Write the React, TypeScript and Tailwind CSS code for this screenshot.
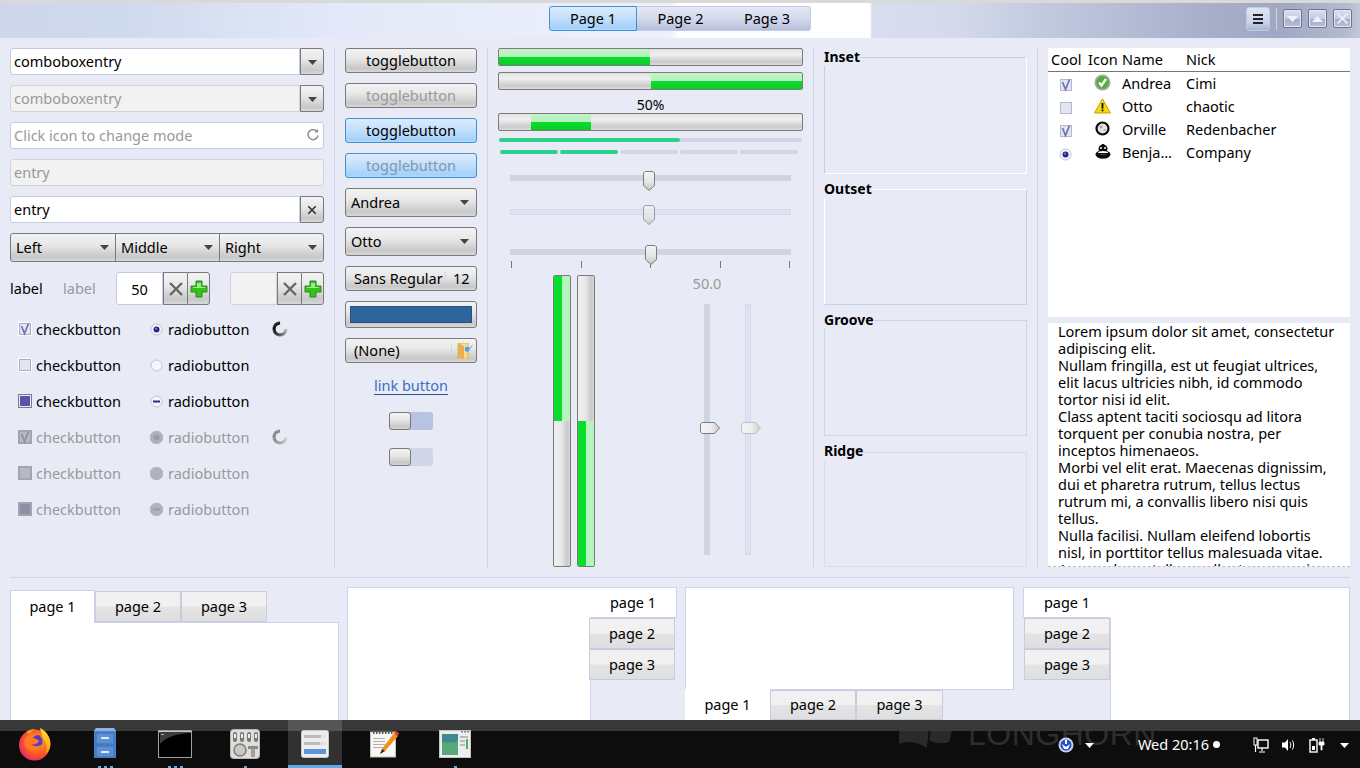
import React from "react";

const btn = "border border-[#7a7a7a] rounded-[3px] bg-[linear-gradient(180deg,#f3f3f3,#e8e8e8_40%,#c8c8c8_85%,#d8d8d8)]";
const blueBtn = "border border-[#3d92db] rounded-[3px] bg-[linear-gradient(180deg,#dcecfc,#c4e0fb_45%,#a4d2fb_90%,#b4d8fb)]";
const entry = "border border-[#c4cbe6] rounded-[3px] bg-white";
const disabledEntry = "border border-[#cfd3e0] rounded-[3px] bg-[#f2f2f2] text-[#999999]";
const troughH = "border border-[#7a7a7a] rounded-[2px] bg-[linear-gradient(180deg,#e2e2e2,#efefef_35%,#cacaca_80%,#dcdcdc)]";
const fillH = "bg-[linear-gradient(180deg,#c4f2c8,#b2f2bc_48%,#0ade2c_52%,#0cca28)]";
const troughV = "border border-[#7a7a7a] rounded-[2px] bg-[linear-gradient(90deg,#efefef,#e8e8e8_45%,#c8c8c8_85%,#dcdcdc)]";
const fillV = "bg-[linear-gradient(90deg,#0ade2c,#0ade2c_48%,#b6f4be_52%,#b6f4be)]";
const tabIdle = "border border-[#c8cdde] bg-[linear-gradient(180deg,#f1f1f1,#f1f1f1_48%,#e4e4e4_52%,#dedede)]";

function Arrow({ c = "#444" }: { c?: string }) {
  return (
    <svg width="9" height="5" viewBox="0 0 9 5" className="shrink-0 mt-[2px]">
      <path d="M0 0h9L4.500 5z" fill={c} />
    </svg>
  );
}

function XIcon({ c = "#666", w = 2.4, s = 16 }: { c?: string; w?: number; s?: number }) {
  return (
    <svg width={s} height={s} viewBox="0 0 16 16">
      <path d="M2 2l12 12M14 2L2 14" stroke={c} strokeWidth={w} fill="none" />
    </svg>
  );
}

function Plus() {
  return (
    <svg width="18" height="18" viewBox="0 0 18 18">
      <path d="M6 1h6v5h5v6h-5v5H6v-5H1V6h5z" fill="#35c31a" stroke="#2c8a14" strokeWidth="1" />
      <path d="M7 3h4v4h4v1H3V7h4z" fill="#9fe888" />
    </svg>
  );
}

function Spinner({ c = "#111" }: { c?: string }) {
  const N = 24;
  const segs = Array.from({ length: N }, (_, i) => i);
  return (
    <svg width="16" height="16" viewBox="0 0 16 16">
      {segs.map((i) => {
        const t = i / N;
        const a0 = -Math.PI / 2 - t * Math.PI * 1.5;
        const a1 = -Math.PI / 2 - ((i + 1.2) / N) * Math.PI * 1.5;
        const op = t < 0.35 ? 1 : 1 - ((t - 0.35) / 0.65) * 0.88;
        return (
          <path
            key={i}
            d={`M${8 + 6 * Math.cos(a0)} ${8 + 6 * Math.sin(a0)}L${8 + 6 * Math.cos(a1)} ${8 + 6 * Math.sin(a1)}`}
            stroke={c}
            strokeWidth="3"
            opacity={op}
          />
        );
      })}
    </svg>
  );
}

function Check({ kind, dis, faint }: { kind: "on" | "off" | "mix"; dis?: boolean; faint?: boolean }) {
  const outer = dis ? "#a4a4b0" : kind === "mix" ? "#77798f" : "#ffffff";
  const inner = dis ? "#a4a4b0" : kind === "mix" ? "#e8ebf6" : faint ? "#b4b9cc" : "#a8aec6";
  const fill = dis ? "#b6b8c4" : "#e2e6f3";
  return (
    <svg width="14" height="14" viewBox="0 0 14 14" className="shrink-0">
      <rect x="0.500" y="0.500" width="13" height="13" fill={fill} stroke={outer} />
      <rect x="1.500" y="1.500" width="11" height="11" fill="none" stroke={inner} />
      {kind === "on" && <path d="M3.500 4l3 7.500L10.500 1.500" stroke={dis ? "#8e90a0" : "#6f74b4"} strokeWidth="1.700" fill="none" />}
      {kind === "mix" && <rect x="2" y="2" width="10" height="10" fill={dis ? "#8e8ea6" : "#5f50a8"} />}
    </svg>
  );
}

function Radio({ kind, dis }: { kind: "on" | "off" | "mix"; dis?: boolean }) {
  return (
    <svg width="13" height="13" viewBox="0 0 13 13" className="shrink-0">
      <circle cx="6.500" cy="6.500" r={dis ? 6.300 : 5.500} fill={dis ? "#b0b2bd" : "#f4f6fb"} stroke={dis ? "#b0b2bd" : "#bcc2d4"} />
      {kind === "on" && <circle cx="6.500" cy="6.500" r="3" fill={dis ? "#9a9ca8" : "#28288c"} />}
      {kind === "on" && !dis && <circle cx="6" cy="5.800" r="1" fill="#8a8ad0" />}
      {kind === "mix" && <rect x="3" y="5.500" width="7" height="2" fill={dis ? "#9a9ca8" : "#28288c"} />}
    </svg>
  );
}

function ThumbDown() {
  return (
    <svg width="12" height="20" viewBox="0 0 12 20">
      <defs>
        <linearGradient id="td" x1="0" y1="0" x2="0" y2="1">
          <stop offset="0" stopColor="#f4f4f4" />
          <stop offset="0.55" stopColor="#e6e6e6" />
          <stop offset="1" stopColor="#c4c4c4" />
        </linearGradient>
      </defs>
      <path d="M2 .5h8l1.500 1.500v12.500L6 19.500 .5 14.500V2z" fill="url(#td)" stroke="#7d7d7d" />
    </svg>
  );
}

function ThumbRight({ dis }: { dis?: boolean }) {
  return (
    <svg width="20" height="12" viewBox="0 0 20 12">
      <defs>
        <linearGradient id="tr" x1="0" y1="0" x2="1" y2="0">
          <stop offset="0" stopColor="#f4f4f4" />
          <stop offset="0.55" stopColor="#eeeeee" />
          <stop offset="1" stopColor="#cccccc" />
        </linearGradient>
      </defs>
      <path d="M2 .5h12.500L19.500 6l-5 5.500H2L.5 10V2z" fill="url(#tr)" stroke={dis ? "#c0c0c6" : "#7d7d7d"} />
    </svg>
  );
}

function Progress({ children }: { children: React.ReactNode }) {
  return <div className={`${troughH} h-[18px] w-full flex overflow-hidden`}>{children}</div>;
}

function HScale({ dis, thumb }: { dis?: boolean; thumb: string }) {
  return (
    <div className={`relative h-[6px] w-[281px] ml-[12px] ${dis ? "bg-[#dfe3f0] border border-[#d3d9ee]" : "bg-[#cfd4e3]"}`}>
      <div className={`absolute ${dis ? "top-[-5px]" : "top-[-4px]"} ${thumb} ${dis ? "opacity-70" : ""}`}>
        <ThumbDown />
      </div>
    </div>
  );
}

function VScale({ dis }: { dis?: boolean }) {
  return (
    <div className={`relative w-[6px] h-[251px] ${dis ? "bg-[#dfe3f0] border border-[#d3d9ee]" : "bg-[#cfd4e3]"}`}>
      <div className={`absolute ${dis ? "left-[-5px] top-[117px]" : "left-[-4px] top-[118px]"}`}>
        <ThumbRight dis={dis} />
      </div>
    </div>
  );
}

function Frame({ label, h, cls, up }: { label: string; h: string; cls: string; up?: boolean }) {
  return (
    <fieldset className={`${h} border ${cls} w-full`}>
      <legend className={`-ml-px font-bold text-[14px] text-black ${up ? "leading-[16px] pb-[2px]" : "leading-[18px]"}`}>{label}</legend>
    </fieldset>
  );
}

function Sep() {
  return <div className="w-px bg-[#cdd3ea] self-stretch shrink-0" />;
}

function TreeIcon({ k }: { k: number }) {
  if (k === 0)
    return (
      <svg width="17" height="17" viewBox="0 0 17 17">
        <circle cx="8.500" cy="8.500" r="8" fill="#a8a8a8" />
        <circle cx="8.500" cy="8.500" r="6.300" fill="#4fae34" />
        <path d="M5 8.500l2.500 3L12 5" stroke="#fff" strokeWidth="2.400" fill="none" />
      </svg>
    );
  if (k === 1)
    return (
      <svg width="17" height="16" viewBox="0 0 17 16">
        <path d="M8.500 .8L16.500 15H.5z" fill="#f5d90a" stroke="#c9a400" />
        <rect x="7.600" y="5" width="1.800" height="5.500" fill="#111" />
        <rect x="7.600" y="11.500" width="1.800" height="1.800" fill="#111" />
      </svg>
    );
  if (k === 2)
    return (
      <svg width="15" height="15" viewBox="0 0 15 15" className="ml-[1px]">
        <circle cx="7.500" cy="7.500" r="6" fill="#e4e4e4" stroke="#0a0a0a" strokeWidth="2.200" />
        <circle cx="6" cy="6" r="1.500" fill="#a8a8a8" />
        <circle cx="9.500" cy="9" r="1" fill="#a8a8a8" />
      </svg>
    );
  return (
    <svg width="16" height="15" viewBox="0 0 16 15" className="ml-[1px]">
      <circle cx="8" cy="5" r="4.500" fill="#0a0a0a" />
      <rect x="7" y="0" width="2" height="2" fill="#0a0a0a" />
      <circle cx="6" cy="4" r="1" fill="#ffffff" />
      <circle cx="10" cy="4" r="1" fill="#ffffff" />
      <ellipse cx="8" cy="10.500" rx="7.500" ry="4.200" fill="#0a0a0a" />
      <ellipse cx="8" cy="8.800" rx="5" ry="1.800" fill="#ffffff" />
      <rect x="2" y="9" width="12" height="1.500" fill="#0a0a0a" />
    </svg>
  );
}

function Firefox() {
  return (
    <svg width="34" height="34" viewBox="0 0 34 34">
      <defs>
        <radialGradient id="ff1" cx="0.6" cy="0.4" r="0.7">
          <stop offset="0" stopColor="#ffb020" />
          <stop offset="0.55" stopColor="#ff5a20" />
          <stop offset="1" stopColor="#e0207a" />
        </radialGradient>
        <linearGradient id="ff2" x1="0" y1="0" x2="0" y2="1">
          <stop offset="0" stopColor="#ffe030" />
          <stop offset="1" stopColor="#ff9a10" />
        </linearGradient>
      </defs>
      <circle cx="16.500" cy="18" r="15.500" fill="url(#ff1)" />
      <path d="M22 1c6 3 11 9 10.500 17-.5 4-2 7-5 9 2-5 1-11-2-15-1-4-3-7-3.500-11z" fill="url(#ff2)" />
      <circle cx="16" cy="15" r="8.500" fill="#5a3ac0" />
      <path d="M9 9c3-3 9-4 12-1-3 0-5 1-6 3 2 1 5 1 6 3-1 3-5 4-8 3 3 3 8 3 11 0-1 6-9 9-14 5-5-3-5-10-1-13z" fill="#ff7a20" />
      <path d="M8 5c3-2 6-3 9-3-2 1-4 3-5 5z" fill="#ff9a20" />
    </svg>
  );
}

function Cabinet() {
  return (
    <svg width="24" height="32" viewBox="0 0 24 32">
      <path d="M3 0h18l2 3v27H1V3z" fill="#4d82cc" />
      <path d="M3 0h18l2 3H1z" fill="#8fb4e2" />
      <rect x="3" y="5" width="18" height="11" fill="#5c90d6" stroke="#3f6fb2" />
      <rect x="3" y="18" width="18" height="11" fill="#5c90d6" stroke="#3f6fb2" />
      <rect x="8" y="9" width="8" height="2" rx="0.500" fill="#e8eef8" />
      <rect x="8" y="23" width="8" height="2" rx="0.500" fill="#e8eef8" />
    </svg>
  );
}

function Terminal() {
  return (
    <svg width="34" height="28" viewBox="0 0 34 28">
      <rect x="0.500" y="0.500" width="33" height="27" fill="#000" stroke="#a0a0a0" />
      <rect x="1" y="1" width="32" height="1.500" fill="#c8c8c8" />
      <path d="M2 14C8 7 18 4 32 3v-1H2z" fill="#3c3c3c" />
      <rect x="3" y="4" width="3" height="1" fill="#aaa" />
    </svg>
  );
}

function Tweak() {
  return (
    <svg width="30" height="30" viewBox="0 0 30 30">
      <rect x="0.500" y="0.500" width="29" height="29" rx="3" fill="#dededa" stroke="#b8b8b0" />
      {[4, 11, 18, 25].map((x) => (
        <g key={x}>
          <rect x={x - 1} y="3" width="4" height="10" rx="2" fill="#777" />
          <rect x={x} y="5" width="2" height="4" fill="#eee" />
        </g>
      ))}
      <circle cx="10" cy="21" r="6" fill="#c8c8c0" stroke="#7c7c7c" strokeWidth="1.500" />
      <rect x="18" y="17" width="10" height="3" fill="#8a8a8a" />
      <rect x="21" y="20" width="4" height="8" fill="#a0a0a0" />
    </svg>
  );
}

function WidgetIcon() {
  return (
    <svg width="28" height="28" viewBox="0 0 28 28">
      <rect x="0.500" y="0.500" width="27" height="27" rx="2" fill="#eeeeec" stroke="#c8c8c8" />
      <rect x="3" y="5" width="22" height="3" fill="#bcbcbc" />
      <rect x="20" y="5" width="5" height="3" fill="#e4e4e4" />
      <rect x="3" y="12" width="22" height="3" fill="#bcbcbc" />
      <rect x="19" y="12" width="6" height="3" fill="#e0e0e0" />
      <rect x="3" y="19" width="22" height="5" fill="#5a94dc" />
    </svg>
  );
}

function Notepad() {
  return (
    <svg width="30" height="28" viewBox="0 0 30 28">
      <rect x="0.500" y="2" width="25" height="25" fill="#f8f8f4" stroke="#c0c0b8" />
      {[3, 6, 9, 12, 15, 18, 21].map((x) => (
        <rect key={x} x={x} y="0" width="1.500" height="4" fill="#555" />
      ))}
      {[8, 11, 14, 17].map((y) => (
        <rect key={y} x="3" y={y} width="12" height="1" fill="#b0b0b0" />
      ))}
      <path d="M10 24l2-5L24 3l4 3-13 15z" fill="#f09020" />
      <path d="M24 3l2-2 3 2-1 3z" fill="#d84030" />
      <path d="M10 24l2-5 3 2z" fill="#333" />
    </svg>
  );
}

function WindowIcon() {
  return (
    <svg width="32" height="28" viewBox="0 0 32 28">
      <rect x="0.500" y="0.500" width="31" height="27" fill="#ededed" stroke="#c4c4c4" />
      <rect x="3" y="4" width="16" height="21" fill="#3a8a90" />
      <path d="M3 25V12c6 0 12 2 16-2v15z" fill="#58a878" />
      <rect x="21" y="6" width="8" height="2" fill="#bbb" />
      <rect x="21" y="10" width="5" height="2" fill="#bbb" />
      <rect x="27" y="9" width="2" height="10" fill="#58a870" />
      <rect x="21" y="14" width="5" height="2" fill="#bbb" />
      <rect x="22" y="1" width="2" height="1.500" fill="#888" />
      <rect x="25" y="1" width="2" height="1.500" fill="#888" />
      <rect x="28" y="1" width="2" height="1.500" fill="#888" />
    </svg>
  );
}

function TaskItem({ children, dots = 0, active }: { children: React.ReactNode; dots?: number; active?: boolean }) {
  return (
    <div className={`relative w-[54px] h-full flex items-center justify-center ${active ? "bg-white/15" : ""}`}>
      {children}
      {active && <div className="absolute bottom-0 inset-x-0 h-[3px] bg-[#62a8e8]" />}
      {dots > 0 && (
        <div className="absolute bottom-0 inset-x-0 flex justify-center gap-[3px]">
          {Array.from({ length: dots }, (_, i) => (
            <div key={i} className="w-[3px] h-[2px] bg-[#62a8e8]" />
          ))}
        </div>
      )}
    </div>
  );
}

const lorem = [
  "Lorem ipsum dolor sit amet, consectetur",
  "adipiscing elit.",
  "Nullam fringilla, est ut feugiat ultrices,",
  "elit lacus ultricies nibh, id commodo",
  "tortor nisi id elit.",
  "Class aptent taciti sociosqu ad litora",
  "torquent per conubia nostra, per",
  "inceptos himenaeos.",
  "Morbi vel elit erat. Maecenas dignissim,",
  "dui et pharetra rutrum, tellus lectus",
  "rutrum mi, a convallis libero nisi quis",
  "tellus.",
  "Nulla facilisi. Nullam eleifend lobortis",
  "nisl, in porttitor tellus malesuada vitae.",
  "Aenean lacus tellus, pellentesque quis",
];

const rows = [
  ["on", "Andrea", "Cimi"],
  ["off", "Otto", "chaotic"],
  ["on", "Orville", "Redenbacher"],
  ["radio", "Benja…", "Company"],
];

export default function App() {
  return (
    <div className="relative w-[1360px] h-[768px] overflow-hidden bg-[#e8ebf6] text-black text-[14.5px] leading-[18px] font-['Noto_Sans',sans-serif]">
      {/* header */}
      <div className="h-[3px] bg-[#d9d9d9]" />
      <div className="h-[35px] flex items-start bg-[linear-gradient(90deg,#cdd6ea,#d0daee_130px,#e3e9f8_340px,#edf1fb_670px,#ffffff_680px,#ffffff_870px,#d9deee_872px,#d4daea_955px,#c4cce2_1030px,#a9b0ca_1200px,#a0a7c2_1280px,#b4bad0_1345px,#c2c8d8)]">
        <div className="ml-[549px] mt-[3px] flex h-[25px] w-[262px]">
          <div className={`${blueBtn} rounded-r-none w-[88px] flex items-center justify-center pb-[2px]`}>Page 1</div>
          <div className="w-[87px] border-y border-[#c3cbe4] bg-[linear-gradient(180deg,#e4e8f5,#d4daec_50%,#b6bedb)] flex items-center justify-center pb-[2px]">Page 2</div>
          <div className="w-[87px] border border-l-0 border-[#c3cbe4] rounded-r-[3px] bg-[linear-gradient(180deg,#e4e8f5,#d4daec_50%,#b6bedb)] flex items-center justify-center pb-[2px]">Page 3</div>
        </div>
        <div className="ml-[435px] mt-[4px] w-[24px] h-[24px] rounded-[3px] bg-[linear-gradient(180deg,#dfe4f4,#ced5ea_60%,#aab4d6)] flex flex-col items-center justify-center gap-[2px] border border-[#c4cae0]">
          <div className="w-[10px] h-[2px] bg-[#222]" />
          <div className="w-[10px] h-[2px] bg-[#222]" />
          <div className="w-[10px] h-[2px] bg-[#222]" />
        </div>
        <div className="ml-[6px] mt-[5px] w-px h-[22px] bg-[#d0d5e4]" />
        <div className="ml-[6px] mt-[6px] flex gap-[6px]">
          {["down", "up", "x"].map((k) => (
            <div key={k} className="w-[19px] h-[19px] rounded-[2px] border border-[#6f7488] bg-[linear-gradient(180deg,#dadfee,#c4cce4_50%,#a4acd0_52%,#b8bfdb)] flex items-center justify-center shadow-[inset_0_0_0_1px_#e4e7f2]">
              {k === "down" && <svg width="11" height="6" viewBox="0 0 11 6"><path d="M0 0h11L5.500 6z" fill="#f2f3f8" /></svg>}
              {k === "up" && <svg width="11" height="6" viewBox="0 0 11 6"><path d="M0 6h11L5.500 0z" fill="#f2f3f8" /></svg>}
              {k === "x" && <XIcon c="#eceef5" w={2.200} s={13} />}
            </div>
          ))}
        </div>
      </div>

      {/* main */}
      <div className="flex gap-[10px] px-[10px] pt-[10px] h-[529px]">
        {/* col 1 */}
        <div className="w-[314px] shrink-0 flex flex-col gap-[10px]">
          <div className="flex h-[27px]">
            <div className={`${entry} rounded-r-none flex-1 flex items-center px-[3px] pb-[2px]`}>comboboxentry</div>
            <div className={`${btn} rounded-l-none w-[24px] flex items-center justify-center`}><Arrow /></div>
          </div>
          <div className="flex h-[27px]">
            <div className={`${disabledEntry} rounded-r-none flex-1 flex items-center px-[3px] pb-[2px]`}>comboboxentry</div>
            <div className={`${btn} rounded-l-none w-[24px] flex items-center justify-center`}><Arrow /></div>
          </div>
          <div className={`${entry} h-[27px] flex items-center justify-between px-[3px] pb-[2px] text-[#999999]`}>
            <span>Click icon to change mode</span>
            <svg width="12" height="12" viewBox="0 0 12 12" className="mr-[1px]">
              <path d="M10 2.500A5 5 0 1 0 11 6.500" stroke="#8e8e8e" strokeWidth="1.500" fill="none" />
              <path d="M7.500 3.500h3.500V0z" fill="#8e8e8e" />
            </svg>
          </div>
          <div className={`${disabledEntry} h-[27px] flex items-center px-[3px] pb-[2px]`}>entry</div>
          <div className="flex h-[27px]">
            <div className={`${entry} rounded-r-none flex-1 flex items-center px-[3px] pb-[2px]`}>entry</div>
            <div className={`${btn} rounded-l-none w-[24px] flex items-center justify-center`}><XIcon c="#333" w={2.600} s={10} /></div>
          </div>
          <div className={`${btn} h-[29px] flex`}>
            <div className="w-[105px] flex items-center justify-between pl-[5px] pr-[6px] pb-[2px] border-r border-[#7a7a7a]">Left<Arrow /></div>
            <div className="w-[104px] flex items-center justify-between pl-[5px] pr-[6px] pb-[2px] border-r border-[#7a7a7a]">Middle<Arrow /></div>
            <div className="flex-1 flex items-center justify-between pl-[5px] pr-[6px] pb-[2px]">Right<Arrow /></div>
          </div>
          <div className="h-[33px] flex items-center">
            <span className="w-[53px] pb-[2px]">label</span>
            <span className="w-[53px] pb-[2px] text-[#999999]">label</span>
            <div className="flex h-full w-[94px]">
              <div className={`${entry} rounded-r-none w-[47px] flex items-center justify-center`}>50</div>
              <div className={`${btn} rounded-none border-x-0 border-l w-[24px] flex items-center justify-center`}><XIcon /></div>
              <div className={`${btn} rounded-l-none w-[23px] flex items-center justify-center`}><Plus /></div>
            </div>
            <div className="flex h-full w-[94px] ml-[20px]">
              <div className={`${disabledEntry} rounded-r-none w-[47px]`} />
              <div className={`${btn} rounded-none border-x-0 border-l w-[24px] flex items-center justify-center`}><XIcon /></div>
              <div className={`${btn} rounded-l-none w-[23px] flex items-center justify-center`}><Plus /></div>
            </div>
          </div>
          <div className="grid grid-cols-[132px_123px_auto] grid-rows-[repeat(6,36px)] pl-[8px] -mt-[4px] items-center">
            {([
              ["on", false, true],
              ["off", false, false],
              ["mix", false, false],
              ["on", true, true],
              ["off", true, false],
              ["mix", true, false],
            ] as const).map(([k, dis, spin], i) => (
              <React.Fragment key={i}>
                <div className={`flex items-center gap-[4px] ${dis ? "text-[#999999]" : ""}`}>
                  <Check kind={k} dis={dis} />checkbutton
                </div>
                <div className={`flex items-center gap-[5px] ${dis ? "text-[#999999]" : ""}`}>
                  <Radio kind={k} dis={dis} />radiobutton
                </div>
                <div className="-ml-[1px]">{spin ? <Spinner c={dis ? "#888" : "#111"} /> : null}</div>
              </React.Fragment>
            ))}
          </div>
        </div>

        <Sep />

        {/* col 2 */}
        <div className="w-[132px] shrink-0 flex flex-col">
          <div className={`${btn} h-[25px] flex items-center justify-center pb-[2px]`}>togglebutton</div>
          <div className={`${btn} h-[25px] mt-[10px] flex items-center justify-center pb-[2px] text-[#999999]`}>togglebutton</div>
          <div className={`${blueBtn} h-[25px] mt-[10px] flex items-center justify-center pb-[2px]`}>togglebutton</div>
          <div className={`${blueBtn} h-[25px] mt-[10px] flex items-center justify-center pb-[2px] text-[#7f97ad]`}>togglebutton</div>
          <div className={`${btn} h-[29px] mt-[10px] flex items-center justify-between pl-[5px] pr-[7px] pb-[2px]`}>Andrea<Arrow /></div>
          <div className={`${btn} h-[29px] mt-[10px] flex items-center justify-between pl-[5px] pr-[7px] pb-[2px]`}>Otto<Arrow /></div>
          <div className={`${btn} h-[25px] mt-[10px] flex items-center pl-[8px] pb-[2px]`}>
            <span className="w-[91px]">Sans Regular</span>
            <span className="w-px h-[12px] bg-[#d0d5e6] mr-[7px]" />
            <span>12</span>
          </div>
          <div className={`${btn} h-[27px] mt-[10px] p-[4px]`}>
            <div className="h-full bg-[#2f659f] border border-[#25507f]" />
          </div>
          <div className={`${btn} h-[25px] mt-[10px] flex items-center pl-[8px] pb-[2px]`}>
            <span className="w-[97px]">(None)</span>
            <span className="w-px h-[12px] bg-[#d0d5e6] mr-[5px]" />
            <svg width="16" height="16" viewBox="0 0 16 16" className="mt-[2px]">
              <path d="M1 0h10v16H1z" fill="#f8dc8c" stroke="#d8a840" strokeWidth="0.800" />
              <path d="M1 0l6 3v13l-6-1z" fill="#e4b050" />
              <path d="M15.500 2.500L12 6V4.500H8.500V8H12V6.500" fill="#48a8e8" stroke="#48a8e8" />
            </svg>
          </div>
          <div className="mt-[14px] h-[18px] flex justify-center text-[#3b6ec4]">
            <span className="border-b border-[#2a50a0] leading-[17px] h-[18px]">link button</span>
          </div>
          <div className="mt-[17px] ml-[44px] w-[44px] h-[18px] rounded-[3px] bg-[#b8c3e2]">
            <div className={`${btn} w-[22px] h-[18px]`} />
          </div>
          <div className="mt-[18px] ml-[44px] w-[44px] h-[18px] rounded-[3px] bg-[#d2d7e8]">
            <div className={`${btn} w-[22px] h-[18px]`} />
          </div>
        </div>

        <Sep />

        {/* col 3 */}
        <div className="w-[305px] shrink-0 flex flex-col">
          <Progress>
            <div className={`${fillH} w-[151px]`} />
          </Progress>
          <div className="mt-[6px]">
            <Progress>
              <div className="w-[152px]" />
              <div className={`${fillH} flex-1`} />
            </Progress>
          </div>
          <div className="h-[23px] flex items-end justify-center leading-[16px] text-[14px]">50%</div>
          <Progress>
            <div className="w-[32px]" />
            <div className={`${fillH} w-[60px]`} />
          </Progress>
          <div className="mt-[7px] ml-[1px] w-[303px] h-[4px] rounded-full bg-[#d2d6e2]">
            <div className="w-[181px] h-full rounded-full bg-[#2ad08c]" />
          </div>
          <div className="mt-[8px] ml-[2px] flex gap-[2px]">
            <div className="w-[58px] h-[4px] rounded-full bg-[#2ad08c]" />
            <div className="w-[58px] h-[4px] rounded-full bg-[#2ad08c]" />
            <div className="w-[58px] h-[4px] rounded-full bg-[#d2d6e2]" />
            <div className="w-[58px] h-[4px] rounded-full bg-[#d2d6e2]" />
            <div className="w-[58px] h-[4px] rounded-full bg-[#d2d6e2]" />
          </div>
          <div className="mt-[21px]"><HScale thumb="left-[133px]" /></div>
          <div className="mt-[28px]"><HScale dis thumb="left-[132px]" /></div>
          <div className="mt-[34px]"><HScale thumb="left-[135px]" /></div>
          <div className="mt-[6px] ml-[13px] w-[279px] h-[7px] flex justify-between">
            {[0, 1, 2, 3, 4].map((i) => (
              <div key={i} className="w-px h-full bg-[#777]" />
            ))}
          </div>
          <div className="mt-[7px] flex h-[292px]">
            <div className={`${troughV} ml-[55px] w-[18px] h-full flex flex-col overflow-hidden`}>
              <div className={`${fillV} h-[145px]`} />
            </div>
            <div className={`${troughV} ml-[6px] w-[18px] h-full flex flex-col overflow-hidden`}>
              <div className="h-[145px]" />
              <div className={`${fillV} flex-1`} />
            </div>
            <div className="ml-[92px] w-[40px] flex flex-col items-center">
              <div className="h-[18px] -mt-[1px] text-[#999999] leading-[18px]">50.0</div>
              <div className="mt-[12px]"><VScale /></div>
            </div>
            <div className="ml-[18px] pt-[29px]">
              <VScale dis />
            </div>
          </div>
        </div>

        <Sep />

        {/* col 4 */}
        <div className="w-[203px] shrink-0 flex flex-col">
          <Frame label="Inset" h="h-[126px]" cls="border-t-[#c8d0e8] border-l-[#c8d0e8] border-r-white border-b-white" />
          <div className="mt-[6px]"><Frame label="Outset" h="h-[125px]" cls="border-t-white border-l-white border-r-[#c8d0e8] border-b-[#c8d0e8]" /></div>
          <div className="mt-[6px]"><Frame label="Groove" h="h-[125px]" cls="border-[#cdd3ea]" /></div>
          <div className="mt-[7px]"><Frame label="Ridge" up h="h-[124px]" cls="border-[#d6dbee]" /></div>
        </div>

        <Sep />

        {/* col 5 */}
        <div className="w-[302px] shrink-0 flex flex-col">
          <div className="h-[269px] bg-white">
            <div className="h-[24px] flex items-center border-b border-[#777] pb-[2px]">
              <span className="ml-[3px] w-[37px]">Cool</span>
              <span className="w-[34px]">Icon</span>
              <span className="w-[64px]">Name</span>
              <span>Nick</span>
            </div>
            {rows.map(([k, name, nick], i) => (
              <div key={i} className="h-[23px] flex items-center">
                <div className="ml-[11px] w-[35px] mt-[3px]">
                  {k === "radio" ? <Radio kind="on" /> : <Check kind={k as "on" | "off"} faint />}
                </div>
                <div className="w-[28px] flex justify-start -mt-[2px]"><TreeIcon k={i} /></div>
                <span className="w-[64px] pb-[2px]">{name}</span>
                <span className="pb-[2px]">{nick}</span>
              </div>
            ))}
          </div>
          <div className="mt-[6px] h-[244px] bg-white overflow-hidden pl-[10px] leading-[17px] border-b border-dashed border-[#bdbdbd] whitespace-nowrap">
            {lorem.map((l, i) => (
              <div key={i}>{l}</div>
            ))}
          </div>
        </div>
      </div>

      {/* separator */}
      <div className="mx-[10px] mt-[10px] h-px bg-[#cdd3ea]" />

      {/* notebooks */}
      <div className="flex gap-[8px] px-[10px] mt-[9px] h-[200px]">
        <div className="w-[329px] flex flex-col relative pt-[2px]">
          <div className="flex items-end h-[33px]">
            <div className="w-[85px] h-[33px] bg-white border border-b-0 border-[#cdd3ea] flex items-center justify-center pb-[2px] z-10 -mb-px">page 1</div>
            <div className={`${tabIdle} w-[86px] h-[31px] flex items-center justify-center pb-[2px]`}>page 2</div>
            <div className={`${tabIdle} w-[86px] h-[31px] flex items-center justify-center pb-[2px]`}>page 3</div>
          </div>
          <div className="flex-1 bg-white border border-[#cdd3ea]" />
        </div>
        <div className="w-[330px] flex">
          <div className="w-[243px] bg-white border border-r-0 border-[#cdd3ea] border-b-0" />
          <div className="flex-1 flex flex-col">
            <div className="h-[31px] bg-white border border-l-0 border-[#cdd3ea] flex items-center justify-center pb-[2px]">page 1</div>
            <div className="border-l border-[#cdd3ea] flex-1">
              <div className={`${tabIdle} ml-[-2px] w-[86px] h-[31px] flex items-center justify-center pb-[2px]`}>page 2</div>
              <div className={`${tabIdle} ml-[-2px] w-[86px] h-[31px] flex items-center justify-center pb-[2px]`}>page 3</div>
            </div>
          </div>
        </div>
        <div className="w-[329px] flex flex-col">
          <div className="h-[103px] bg-white border border-[#cdd3ea]" />
          <div className="flex">
            <div className="w-[85px] h-[31px] -mt-px z-10 bg-white flex items-center justify-center pb-[2px]">page 1</div>
            <div className={`${tabIdle} w-[86px] h-[30px] flex items-center justify-center pb-[2px]`}>page 2</div>
            <div className={`${tabIdle} w-[87px] h-[30px] flex items-center justify-center pb-[2px]`}>page 3</div>
          </div>
        </div>
        <div className="w-[327px] ml-[1px] flex">
          <div className="w-[87px] flex flex-col">
            <div className="h-[31px] bg-white border border-r-0 border-[#cdd3ea] flex items-center justify-center pb-[2px]">page 1</div>
            <div className={`${tabIdle} ml-[1px] h-[31px] flex items-center justify-center pb-[2px]`}>page 2</div>
            <div className={`${tabIdle} ml-[1px] h-[31px] flex items-center justify-center pb-[2px]`}>page 3</div>
          </div>
          <div className="flex-1 flex flex-col">
            <div className="flex-1 bg-white border border-l-0 border-[#cdd3ea] relative">
              <div className="absolute left-0 top-[30px] bottom-0 w-px bg-[#cdd3ea]" />
            </div>
          </div>
        </div>
      </div>

      {/* panel */}
      <div className="absolute left-0 right-0 bottom-0 h-[48px] bg-[#0d0d0d] text-white overflow-hidden">
        <div className="absolute left-[897px] top-[-2px] flex items-start gap-[11px] text-[#2e2e2e]">
          <svg width="60" height="30" viewBox="0 0 56 30"><path d="M0 8c14-8 22 6 30 0L28 30C18 24 10 22 0 26z" fill="#2a2a2a" /><path d="M34 0c8 6 14 4 22 2l-6 22c-6 2-14 2-20-2z" fill="#2a2a2a" /></svg>
          <span className="text-[32px] leading-[32px] tracking-[0.5px] font-['Liberation_Sans',sans-serif]">LONGHORN</span>
        </div>
        <div className="absolute inset-x-0 top-0 h-[11px] bg-[#383838]" />
        <div className="relative flex justify-between h-full">
          <div className="flex h-full gap-[16px] pl-[8px]">
            <TaskItem><Firefox /></TaskItem>
            <TaskItem dots={3}><Cabinet /></TaskItem>
            <TaskItem dots={3}><Terminal /></TaskItem>
            <TaskItem dots={1}><Tweak /></TaskItem>
            <TaskItem active><WidgetIcon /></TaskItem>
            <TaskItem><Notepad /></TaskItem>
            <TaskItem dots={1}><WindowIcon /></TaskItem>
          </div>
          <div className="flex items-center h-full pt-[1px] text-[14.5px]">
            <svg width="16" height="16" viewBox="0 0 16 16" className="mr-[11px]">
              <circle cx="8" cy="8" r="7.500" fill="#c8d2e8" />
              <circle cx="8" cy="8" r="5.500" fill="#2a4fc8" />
              <path d="M4 7l4 3 4-3-2 5H6zM7 3h2v4H7z" fill="#fff" />
            </svg>
            <Arrow c="#ffffff" />
            <span className="ml-[44px] pb-[2px]">Wed 20:16</span>
            <div className="ml-[4px] w-[7px] h-[7px] rounded-full bg-white" />
            <svg width="16" height="16" viewBox="0 0 16 16" className="ml-[33px]">
              <rect x="5" y="3" width="10" height="8" fill="none" stroke="#fff" strokeWidth="1.400" />
              <rect x="1" y="1" width="3" height="7" fill="none" stroke="#fff" />
              <path d="M2.500 8v7M9 11v3M6 15h6" stroke="#fff" strokeWidth="1.200" />
            </svg>
            <svg width="16" height="16" viewBox="0 0 16 16" className="ml-[11px]">
              <path d="M2 5.500h3L8 2v12l-3-3.500H2z" fill="#fff" />
              <path d="M10 5c1 2 1 4 0 6M12.500 3.500c1.500 3 1.500 6 0 9" stroke="#fff" fill="none" />
            </svg>
            <svg width="16" height="16" viewBox="0 0 16 16" className="ml-[13px]">
              <rect x="1" y="3" width="7" height="12" fill="none" stroke="#fff" strokeWidth="1.400" />
              <rect x="3" y="1" width="3" height="2" fill="#fff" />
              <rect x="3" y="9" width="3" height="4" fill="#fff" />
              <path d="M11 1v4M14 1v4M10 5h5v3h-2v5h-1V8h-2z" stroke="#fff" fill="#fff" strokeWidth="0.800" />
            </svg>
            <div className="ml-[15px] mr-[11px]"><Arrow c="#ffffff" /></div>
          </div>
        </div>
      </div>
    </div>
  );
}
